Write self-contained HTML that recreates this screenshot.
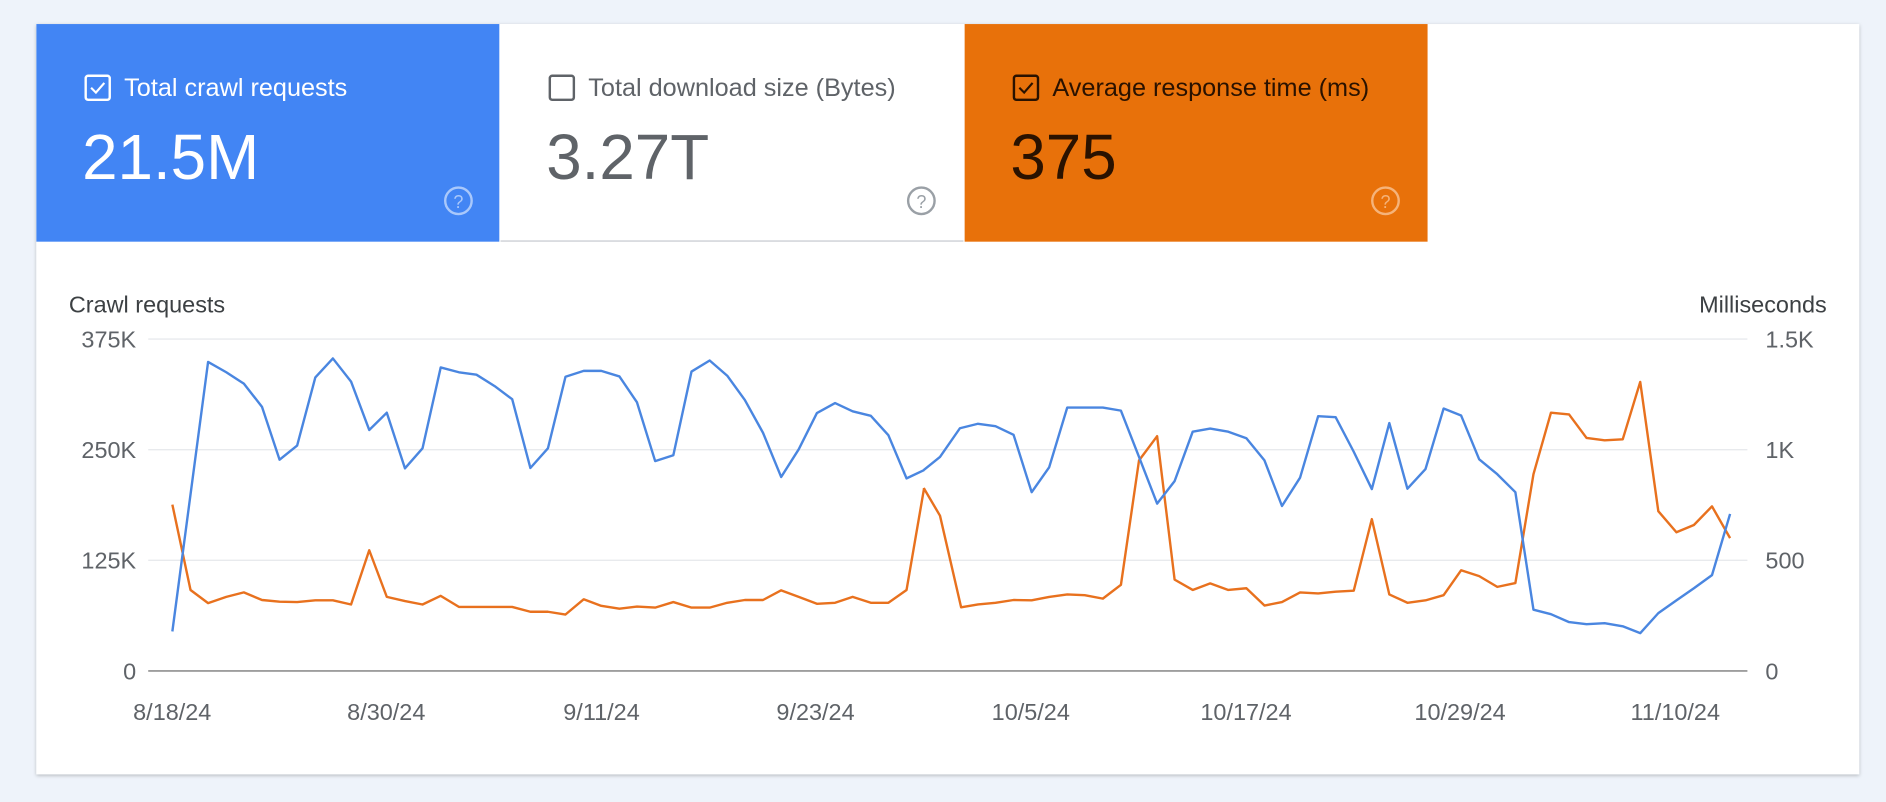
<!DOCTYPE html>
<html><head><meta charset="utf-8"><style>
html,body{margin:0;padding:0;background:#eef3fa;}
svg{display:block}
text{font-family:"Liberation Sans",sans-serif}
</style></head><body>
<svg width="1886" height="802" viewBox="0 0 1568 667" xmlns="http://www.w3.org/2000/svg">
<defs><filter id="sh" x="-5%" y="-5%" width="110%" height="110%"><feDropShadow dx="0" dy="1" stdDeviation="1.5" flood-color="#000" flood-opacity="0.25"/></filter></defs>
<rect x="0" y="0" width="1568" height="667" fill="#eef3fa"/>
<rect x="30" y="20" width="1516" height="624" fill="#fff" filter="url(#sh)"/>
<!-- tiles -->
<rect x="30" y="20" width="385" height="181" fill="#4285f4"/>
<rect x="416" y="20" width="385" height="181" fill="#fff"/>
<line x1="416" y1="200.5" x2="801" y2="200.5" stroke="#dadce0" stroke-width="1.5"/>
<rect x="802" y="20" width="385" height="181" fill="#e8710a"/>
<!-- tile 1 -->
<rect x="71" y="63" width="20" height="20" rx="2" fill="none" stroke="#fff" stroke-width="2"/>
<path d="M75.5 73 l4 4 l7 -8" fill="none" stroke="#fff" stroke-width="1.8"/>
<text x="103" y="80" font-size="21" fill="#fff">Total crawl requests</text>
<text x="68" y="149" font-size="53" fill="#fff">21.5M</text>
<circle cx="381" cy="167" r="11" fill="none" stroke="#a9c8fb" stroke-width="2"/>
<text x="381" y="173" font-size="15" fill="#a9c8fb" text-anchor="middle">?</text>
<!-- tile 2 -->
<rect x="457" y="63" width="20" height="20" rx="2" fill="none" stroke="#5f6368" stroke-width="2"/>
<text x="489" y="80" font-size="21" fill="#5f6368">Total download size (Bytes)</text>
<text x="454" y="149" font-size="53" fill="#5f6368">3.27T</text>
<circle cx="766" cy="167" r="11" fill="none" stroke="#9aa0a6" stroke-width="2"/>
<text x="766" y="173" font-size="15" fill="#9aa0a6" text-anchor="middle">?</text>
<!-- tile 3 -->
<rect x="843" y="63" width="20" height="20" rx="2" fill="none" stroke="#2a1200" stroke-width="2"/>
<path d="M847.5 73 l4 4 l7 -8" fill="none" stroke="#2a1200" stroke-width="1.8"/>
<text x="875" y="80" font-size="21" fill="#2a1200">Average response time (ms)</text>
<text x="840" y="149" font-size="53" fill="#2a1200">375</text>
<circle cx="1152" cy="167" r="11" fill="none" stroke="#f5b37a" stroke-width="2"/>
<text x="1152" y="173" font-size="15" fill="#f5b37a" text-anchor="middle">?</text>
<!-- axes -->
<text x="57" y="260" font-size="19.5" fill="#3c4043">Crawl requests</text>
<text x="1519" y="260" font-size="19.5" fill="#3c4043" text-anchor="end">Milliseconds</text>
<g stroke="#e8eaed" stroke-width="1.2">
<line x1="123" y1="282" x2="1453" y2="282"/><line x1="123" y1="374" x2="1453" y2="374"/><line x1="123" y1="466" x2="1453" y2="466"/>
</g>
<line x1="123" y1="558" x2="1453" y2="558" stroke="#9e9e9e" stroke-width="1.5"/>
<g font-size="19.5" fill="#5f6368" text-anchor="end">
<text x="113" y="289">375K</text><text x="113" y="381">250K</text><text x="113" y="473">125K</text><text x="113" y="565">0</text>
</g>
<g font-size="19.5" fill="#5f6368">
<text x="1468" y="289">1.5K</text><text x="1468" y="381">1K</text><text x="1468" y="473">500</text><text x="1468" y="565">0</text>
</g>
<g font-size="19.5" fill="#5f6368" text-anchor="middle">
<text x="143" y="599">8/18/24</text><text x="321" y="599">8/30/24</text><text x="500" y="599">9/11/24</text><text x="678" y="599">9/23/24</text><text x="857" y="599">10/5/24</text><text x="1036" y="599">10/17/24</text><text x="1214" y="599">10/29/24</text><text x="1393" y="599">11/10/24</text>
</g>
<!-- series part 1 -->
<g transform="translate(0,216.2) scale(0.5038,0.2874)" fill="none" stroke-width="2.4" stroke-linejoin="round">
<polyline vector-effect="non-scaling-stroke" stroke="#e8711e" points="284,708 314,955 343,993 373,975 402,962 432,984 461,989 490,990 520,985 549,985 579,997 609,840 638,975 668,987 697,997 727,972 757,1004 786,1004 816,1004 845,1004 875,1018 904,1018 933,1026 963,982 992,1001 1022,1009 1051,1003 1081,1006 1111,990 1141,1006 1171,1006 1200,992 1229,984 1259,984 1289,956 1318,975 1348,995 1378,992 1407,975 1437,992 1466,992 1496,955 1525,660"/>
<polyline vector-effect="non-scaling-stroke" stroke="#4a86e0" points="284,1075 343,295 373,325 402,358 432,425 461,578 490,537 520,340 549,285 579,352 609,492 638,442 668,603 697,545 727,311 757,325 786,332 816,365 845,403 875,602 904,545 933,338 963,321 992,321 1022,337 1051,412 1081,582 1111,565 1141,323 1171,291 1200,335 1229,405 1259,500 1289,628 1318,548 1348,443 1378,414 1407,438 1437,451 1466,507 1496,632 1525,608"/>
</g>
<!-- series part 2 -->
<g transform="translate(781.5,216.2) scale(0.5016,0.2874)" fill="none" stroke-width="2.4" stroke-linejoin="round">
<polyline vector-effect="non-scaling-stroke" stroke="#e8711e" points="-27,660 0,740 35,1005 63,997 92,992 122,984 152,985 181,975 211,968 240,970 270,980 300,940 330,580 360,510 389,925 419,955 448,936 478,955 508,950 538,1000 567,990 597,962 627,965 656,960 686,957 716,750 745,968 775,992 805,985 835,970 864,898 894,915 924,946 954,935 984,620 1013,442 1043,447 1072,515 1102,522 1132,519 1161,353 1191,727 1221,788 1250,767 1280,713 1310,805"/>
<polyline vector-effect="non-scaling-stroke" stroke="#4a86e0" points="-27,608 0,570 33,487 63,474 92,481 122,506 152,672 181,600 211,427 240,427 270,427 300,436 330,570 360,705 389,640 419,497 448,488 478,497 508,516 538,580 567,712 597,630 627,452 656,455 686,555 716,663 745,472 775,662 805,605 835,430 864,450 894,577 924,620 954,672 984,1012 1013,1025 1043,1048 1072,1054 1102,1051 1132,1060 1161,1080 1191,1022 1221,985 1250,950 1280,912 1310,735"/>
</g>
</svg>
</body></html>
